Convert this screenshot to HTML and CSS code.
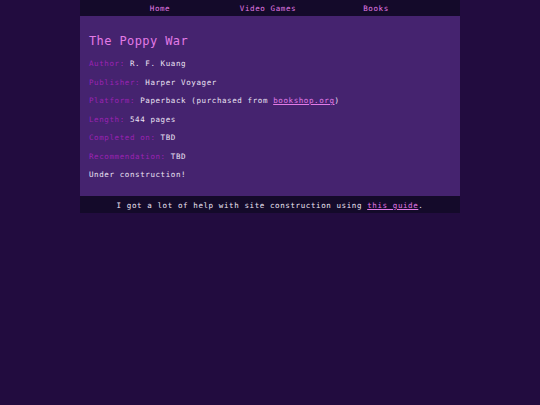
FILE: index.html
```html
<!DOCTYPE html>
<html>
<head>
<meta charset="utf-8">
<link rel="stylesheet" href="styles.css">
</head>
<body>
<div class="wrap">
  <nav class="nav">
    <a class="nav-link" href="#">Home</a>
    <a class="nav-link" href="#">Video Games</a>
    <a class="nav-link" href="#">Books</a>
  </nav>
  <main class="panel">
    <h1 class="title">The Poppy War</h1>
    <p class="row"><span class="label">Author:</span> R. F. Kuang</p>
    <p class="row"><span class="label">Publisher:</span> Harper Voyager</p>
    <p class="row"><span class="label">Platform:</span> Paperback (purchased from <a class="link" href="#">bookshop.org</a>)</p>
    <p class="row"><span class="label">Length:</span> 544 pages</p>
    <p class="row"><span class="label">Completed on:</span> TBD</p>
    <p class="row"><span class="label">Recommendation:</span> TBD</p>
    <p class="row">Under construction!</p>
  </main>
  <footer class="footer">I got a lot of help with site construction using <a class="link" href="#">this guide</a>.</footer>
</div>
</body>
</html>
```

FILE: styles.css
```css
html, body {
  margin: 0;
  padding: 0;
  background: #220c3f;
}
body {
  font-family: "DejaVu Sans Mono", "Liberation Mono", monospace;
  font-size: 7.5px;
  color: #ece4f4;
}
.wrap {
  width: 380px;
  margin: 0 auto;
}
.nav {
  display: flex;
  height: 16px;
  box-sizing: border-box;
  padding-top: 4px;
  padding-left: 26px;
  background: #140a2a;
}
.nav-link {
  width: 108px;
  text-align: center;
  color: #e27ae6;
  text-decoration: none;
  letter-spacing: 0.6px;
  line-height: 10px;
}
.panel {
  background: #45236f;
  padding: 9px 9px 7px;
  overflow: hidden;
}
.title {
  font-size: 12px;
  line-height: 15px;
  font-weight: normal;
  margin: 9px 0 10px;
  color: #e27ae6;
  letter-spacing: 0.4px;
}
.row {
  margin: 8px 0;
  line-height: 10.5px;
  letter-spacing: 0.6px;
}
.label {
  color: #9c22b4;
}
.link {
  color: #e27ae6;
  text-decoration: underline;
}
.footer {
  background: #140a2a;
  height: 17px;
  box-sizing: border-box;
  padding-top: 5px;
  line-height: 10px;
  text-align: center;
  letter-spacing: 0.6px;
}
```
